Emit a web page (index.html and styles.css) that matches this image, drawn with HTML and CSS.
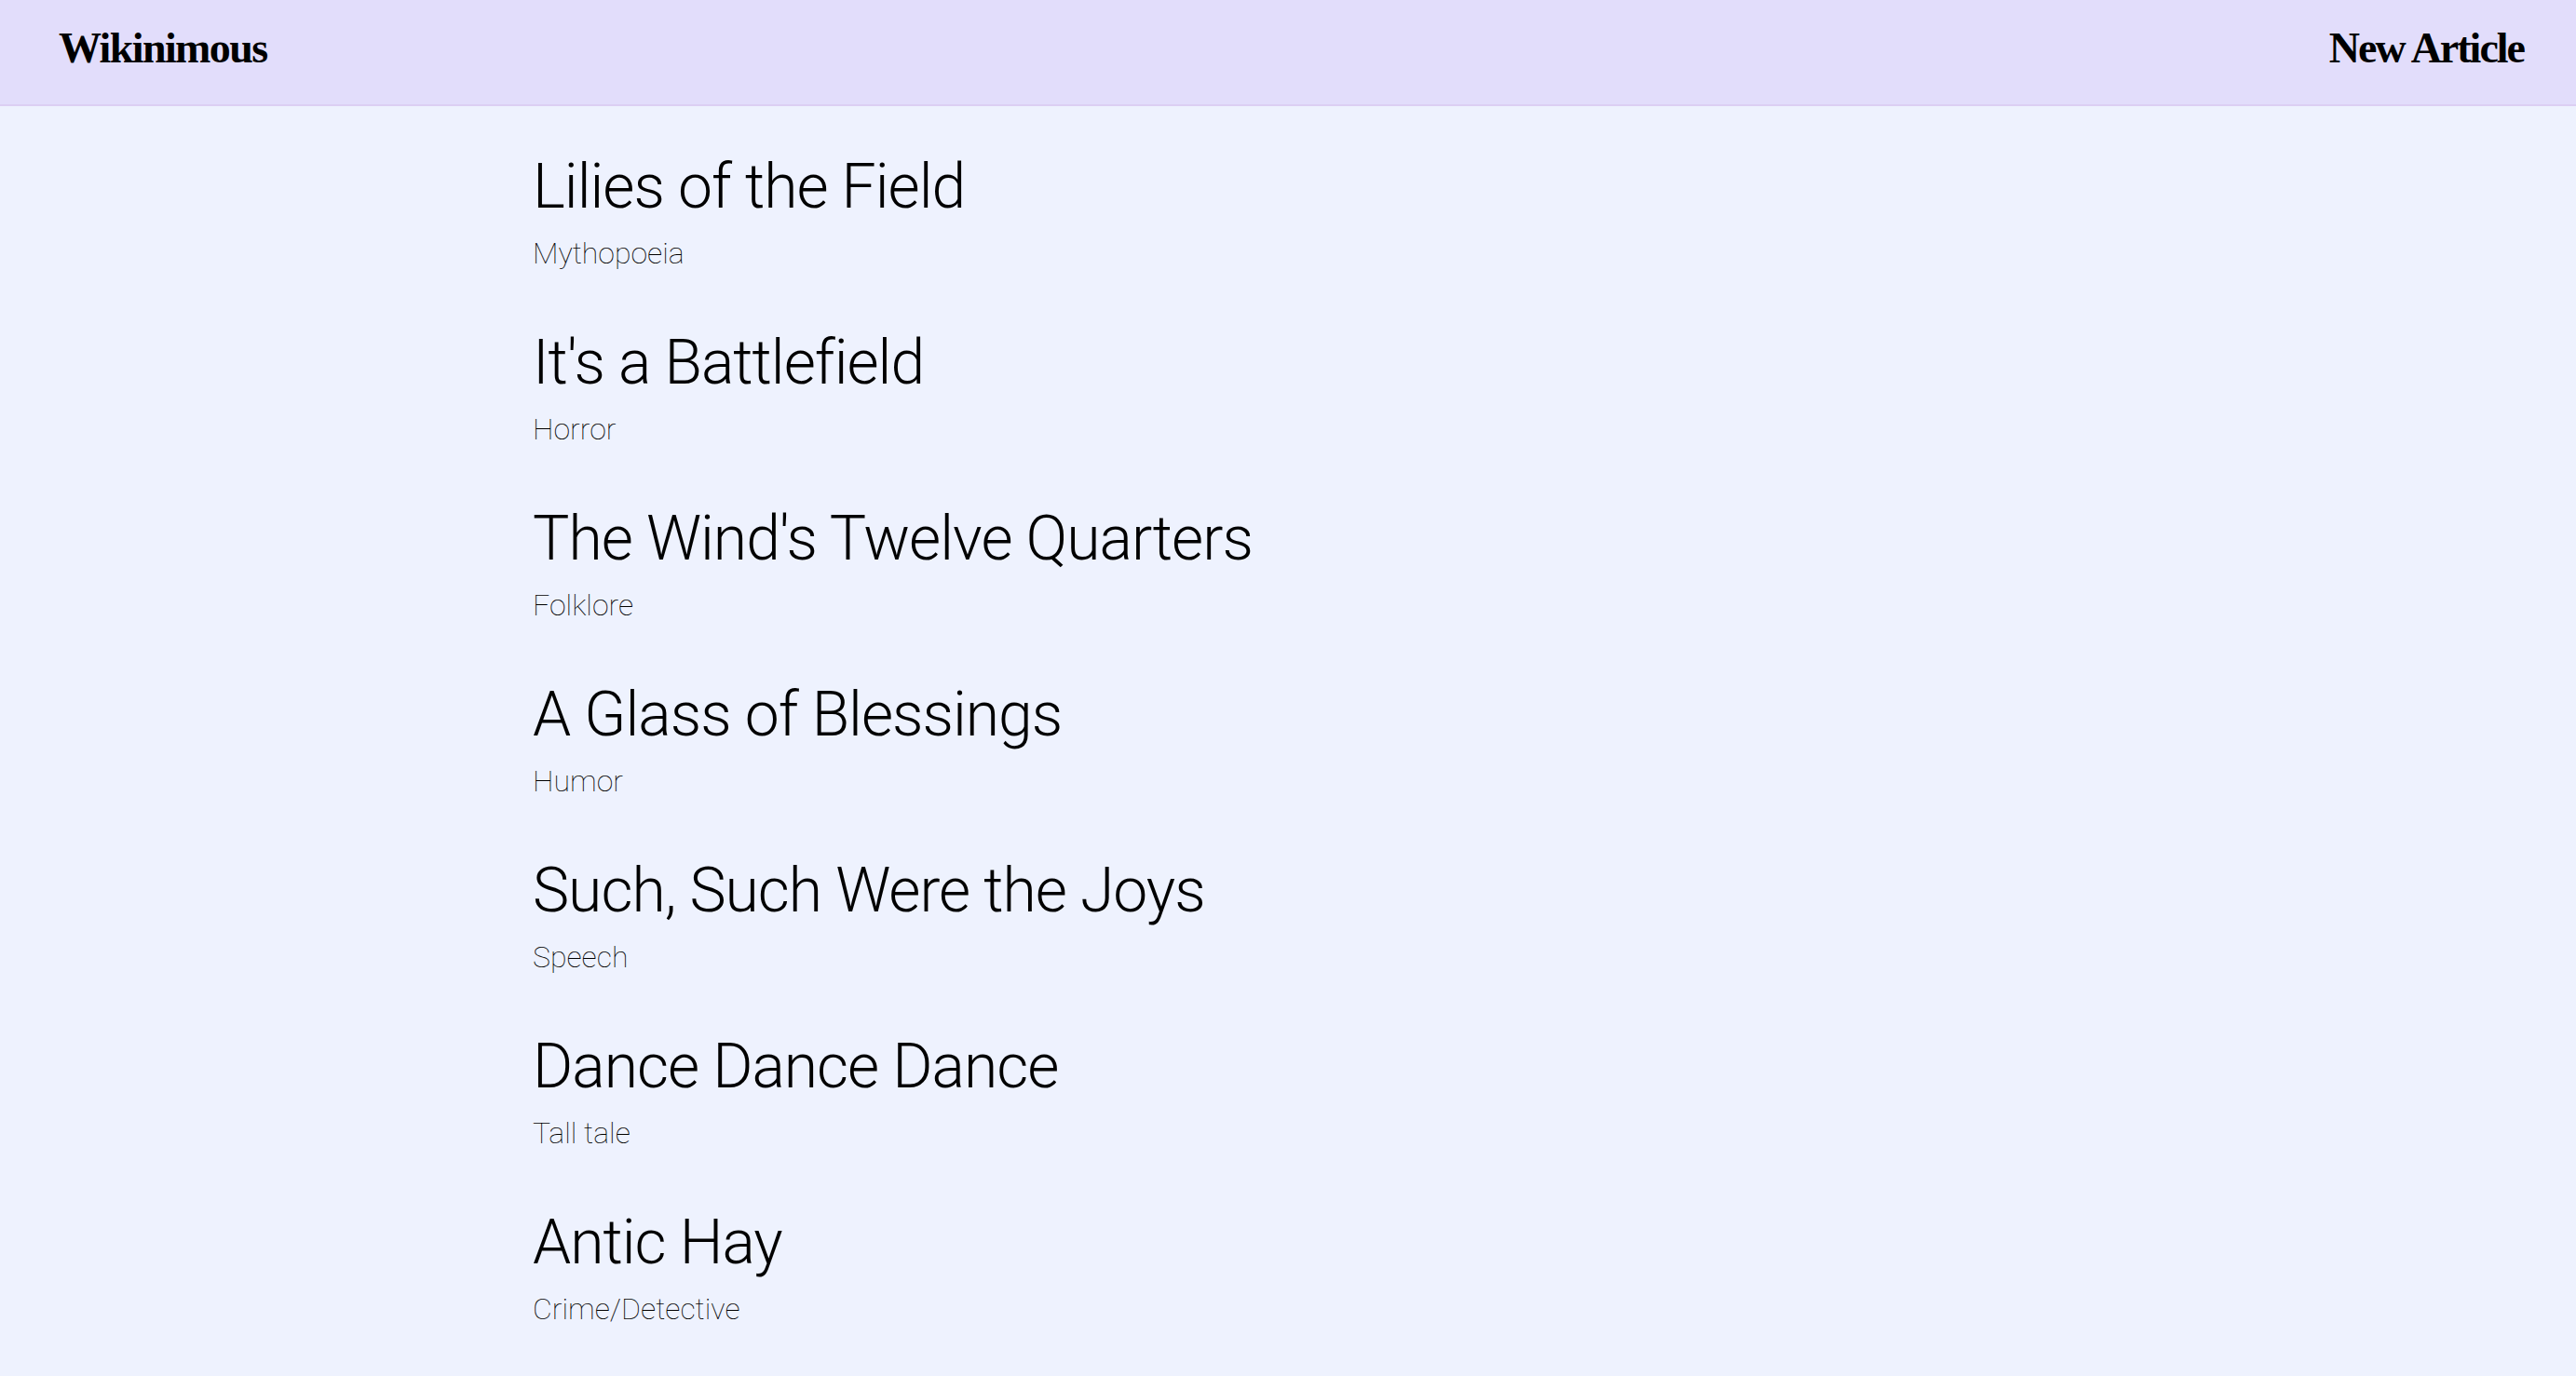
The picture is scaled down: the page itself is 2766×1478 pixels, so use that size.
FILE: index.html
```html
<!DOCTYPE html>
<html lang="en">
<head>
<meta charset="utf-8">
<title>Wikinimous</title>
<link rel="stylesheet" href="styles.css">
</head>
<body>
<header class="topbar">
  <a class="brand" href="#">Wikinimous</a>
  <a class="new-link" href="#">New Article</a>
</header>
<main class="list">
  <article class="entry"><h2 class="entry-title">Lilies of the Field</h2><p class="entry-cat">Mythopoeia</p></article>
  <article class="entry"><h2 class="entry-title">It's a Battlefield</h2><p class="entry-cat">Horror</p></article>
  <article class="entry"><h2 class="entry-title">The Wind's Twelve Quarters</h2><p class="entry-cat">Folklore</p></article>
  <article class="entry"><h2 class="entry-title">A Glass of Blessings</h2><p class="entry-cat">Humor</p></article>
  <article class="entry"><h2 class="entry-title">Such, Such Were the Joys</h2><p class="entry-cat">Speech</p></article>
  <article class="entry"><h2 class="entry-title">Dance Dance Dance</h2><p class="entry-cat">Tall tale</p></article>
  <article class="entry"><h2 class="entry-title">Antic Hay</h2><p class="entry-cat">Crime/Detective</p></article>
</main>
</body>
</html>
```
FILE: styles.css
```css
html, body {
  margin: 0;
  padding: 0;
}
body {
  background: #eef2fe;
  color: #000;
  font-family: Roboto, "Noto Sans", sans-serif;
}
.topbar {
  display: flex;
  justify-content: space-between;
  align-items: center;
  height: 114px;
  padding: 0 56px 9px 63px;
  background: #e2ddfb;
  border-bottom: 2px solid #dccff3;
  box-sizing: border-box;
}
.brand, .new-link {
  font-family: "Liberation Serif", "Times New Roman", serif;
  font-weight: 700;
  font-size: 46px;
  line-height: 1.2;
  letter-spacing: -1.6px;
  color: #000;
  text-decoration: none;
}
.new-link {
  letter-spacing: -2px;
}
.list {
  width: 1622px;
  margin: 0 auto;
  padding-top: 47px;
}
.entry {
  margin-bottom: 58px;
}
.entry-title {
  margin: 0;
  font-weight: 300;
  font-size: 66px;
  line-height: 80px;
  letter-spacing: -1px;
}
.entry-cat {
  margin: 11px 0 0;
  font-weight: 100;
  font-size: 32px;
  line-height: 40px;
  color: #000;
}
```
